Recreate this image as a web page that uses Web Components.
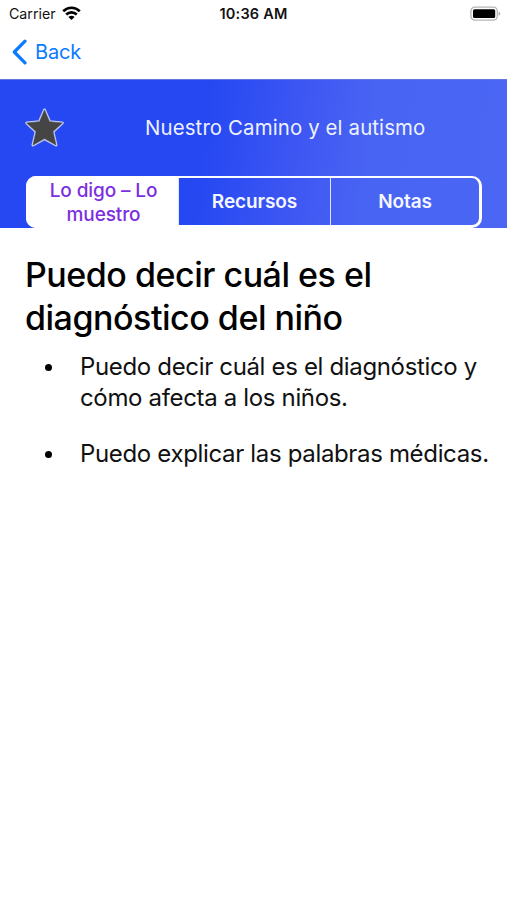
<!DOCTYPE html>
<html lang="es">
<head>
<meta charset="UTF-8">
<title>Nuestro Camino y el autismo</title>
<style>
    body {
        margin: 0;
        background: #fff;
        color: #000;
        font-family: Inter, "Liberation Sans", sans-serif;
    }
</style>
</head>
<body>
    <status-bar carrier="Carrier" time="10:36 AM"></status-bar>
    <nav-back>Back</nav-back>
    <topic-header>
        <span slot="title">Nuestro Camino y el autismo</span>
        <tab-item selected>Lo digo – Lo muestro</tab-item>
        <tab-item>Recursos</tab-item>
        <tab-item>Notas</tab-item>
    </topic-header>
    <topic-content>
        <span slot="heading">Puedo decir cuál es el diagnóstico del niño</span>
        <bullet-item>Puedo decir cuál es el diagnóstico y cómo afecta a los niños.</bullet-item>
        <bullet-item>Puedo explicar las palabras médicas.</bullet-item>
    </topic-content>

<script>
class StatusBar extends HTMLElement {
    constructor(){
        super();
        this.attachShadow({mode: "open"});
        this.shadowRoot.innerHTML = `
            <style>
                :host {
                    display: grid;
                    grid-template-columns: 1fr auto 1fr;
                    align-items: center;
                    box-sizing: border-box;
                    height: 28px;
                    padding: 0 6px 2px 9px;
                    font-size: 14.2px;
                    color: #111;
                }
                .left {
                    display: flex;
                    align-items: center;
                    gap: 6px;
                }
                .time {
                    margin-right: 3px;
                    font-size: 14.5px;
                    font-weight: 600;
                    letter-spacing: 0.2px;
                }
                .battery {
                    justify-self: end;
                    margin-top: 1px;
                }
                svg {
                    display: block;
                }
            </style>
            <div class="left">
                <span>${this.getAttribute("carrier")}</span>
                <svg width="19" height="14" viewBox="0 0 19 14" fill="none" stroke="#000" stroke-width="2.6">
                    <path d="M1.2 5.2C6 .6 13 .6 17.8 5.2M4.2 8.5c3-2.9 7.6-2.9 10.6 0"/>
                    <path d="M9.5 14 6.4 10.9c1.8-1.6 4.4-1.6 6.2 0z" fill="#000" stroke="none"/>
                </svg>
            </div>
            <span class="time">${this.getAttribute("time")}</span>
            <svg class="battery" width="31" height="16" viewBox="0 0 31 16">
                <rect x=".9" y="1.1" width="26.4" height="13" rx="4" fill="#fff" stroke="#b5b5b5" stroke-width="1.3"/>
                <rect x="3" y="3.2" width="22.2" height="8.8" rx="1.5" fill="#000"/>
                <path d="M28.7 5.4c2.1 1 2.1 3.4 0 4.4z" fill="#aaa"/>
            </svg>
        `;
    }
}
customElements.define("status-bar", StatusBar);


class NavBack extends HTMLElement {
    constructor(){
        super();
        this.attachShadow({mode: "open"});
        this.shadowRoot.innerHTML = `
            <style>
                :host {
                    display: flex;
                    align-items: center;
                    gap: 7px;
                    box-sizing: border-box;
                    height: 51px;
                    padding: 0 12px 3px;
                    font-size: 20px;
                    letter-spacing: -0.2px;
                    color: #0a7aff;
                }
            </style>
            <svg width="16" height="26" viewBox="0 0 16 26" fill="none" stroke="#0a7aff" stroke-width="3.2" stroke-linecap="round" stroke-linejoin="round">
                <path d="M13 2.2 2.3 13 13 23.8"/>
            </svg>
            <span><slot></slot></span>
        `;
    }
}
customElements.define("nav-back", NavBack);


class TopicHeader extends HTMLElement {
    constructor(){
        super();
        this.attachShadow({mode: "open"});
        this.shadowRoot.innerHTML = `
            <style>
                :host {
                    display: block;
                    box-sizing: border-box;
                    height: 149px;
                    padding: 0 25px 0 26px;
                    background: linear-gradient(97deg, #2548f2 0%, #2548f2 40%, #4058f3 60%, #4864f3 72%, #4a66f3 100%);
                    border-top: 1px solid #6377dc;
                    color: #eef1ff;
                }
                .top {
                    display: grid;
                    grid-template-columns: 38px 1fr;
                    align-items: center;
                    height: 96px;
                }
                .title {
                    padding: 0 0 2px 81px;
                    font-size: 20.4px;
                    letter-spacing: 0.13px;
                    white-space: nowrap;
                }
                .star {
                    margin-left: -2px;
                }
                .tabs {
                    display: grid;
                    grid-template-columns: 149px 152px 1fr;
                    box-sizing: border-box;
                    height: 52px;
                    border: 3px solid #fff;
                    border-top-width: 2px;
                    border-radius: 10px;
                }
            </style>
            <div class="top">
                <svg class="star" width="42" height="42" viewBox="0 0 42 42">
                    <path d="M20.5 3 25.5 14.7 38.3 16 28.9 24.6 32 38 20.5 31.6 9 38 12.1 24.6 2.7 16 15.5 14.7Z" fill="#454545" stroke="#c4cbf2" stroke-width="3" stroke-linejoin="round"/>
                    <path d="M20.5 3 25.5 14.7 38.3 16 28.9 24.6 32 38 20.5 31.6 9 38 12.1 24.6 2.7 16 15.5 14.7Z" fill="#454545" stroke="#454545" stroke-width=".5" stroke-linejoin="round"/>
                </svg>
                <div class="title"><slot name="title"></slot></div>
            </div>
            <div class="tabs"><slot></slot></div>
        `;
    }
}
customElements.define("topic-header", TopicHeader);


class TabItem extends HTMLElement {
    constructor(){
        super();
        this.attachShadow({mode: "open"});
        this.shadowRoot.innerHTML = `
            <style>
                :host {
                    display: flex;
                    align-items: center;
                    justify-content: center;
                    box-sizing: border-box;
                    padding: 1px 12px 0;
                    border-left: 1.5px solid #dfe5ff;
                    font-size: 19px;
                    font-weight: 600;
                    line-height: 24px;
                    letter-spacing: -0.1px;
                    text-align: center;
                    color: #f5f7ff;
                }
                :host([selected]) {
                    margin: -2px 0 -3px -3px;
                    padding: 2px 10px 0 13px;
                    border-left: 0;
                    border-radius: 10px 0 0 10px;
                    background: #fff;
                    color: #7b2fe0;
                    font-weight: 500;
                }
            </style>
            <span><slot></slot></span>
        `;
    }
}
customElements.define("tab-item", TabItem);


class TopicContent extends HTMLElement {
    constructor(){
        super();
        this.attachShadow({mode: "open"});
        this.shadowRoot.innerHTML = `
            <style>
                :host {
                    display: block;
                    padding: 25px 10px 0 25px;
                }
                h1 {
                    width: 400px;
                    margin: 0 0 13px;
                    font-size: 34px;
                    font-weight: 500;
                    line-height: 43px;
                    letter-spacing: -0.48px;
                }
                .list {
                    display: flex;
                    flex-direction: column;
                    gap: 25.5px;
                }
            </style>
            <h1><slot name="heading"></slot></h1>
            <div class="list"><slot></slot></div>
        `;
    }
}
customElements.define("topic-content", TopicContent);


class BulletItem extends HTMLElement {
    constructor(){
        super();
        this.attachShadow({mode: "open"});
        this.shadowRoot.innerHTML = `
            <style>
                :host {
                    display: grid;
                    grid-template-columns: 35px 1fr;
                    padding-left: 20px;
                    font-size: 24px;
                    line-height: 30.5px;
                    letter-spacing: -0.34px;
                    color: #111;
                }
                .dot {
                    width: 7px;
                    height: 7px;
                    margin-top: 12px;
                    border-radius: 50%;
                    background: #000;
                }
            </style>
            <span class="dot"></span>
            <span><slot></slot></span>
        `;
    }
}
customElements.define("bullet-item", BulletItem);
</script>
</body>
</html>
